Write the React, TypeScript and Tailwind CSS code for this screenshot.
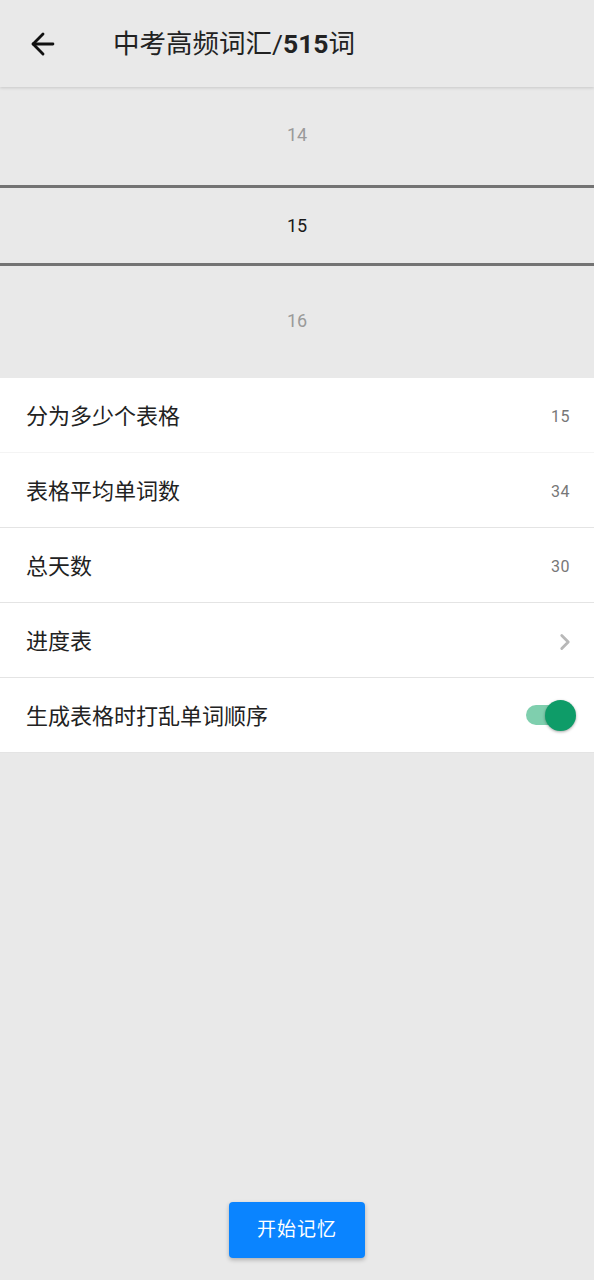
import { ArrowLeft, ChevronRight } from "lucide-react";

const FONT = { fontFamily: '"Roboto", "Noto Sans CJK SC", sans-serif' };

type Row = { label: string; value?: string; kind: "value" | "link" | "switch" };

const ROWS: Row[] = [
  { label: "分为多少个表格", value: "15", kind: "value" },
  { label: "表格平均单词数", value: "34", kind: "value" },
  { label: "总天数", value: "30", kind: "value" },
  { label: "进度表", kind: "link" },
  { label: "生成表格时打乱单词顺序", kind: "switch" },
];

export default function App() {
  return (
    <div className="min-h-[1280px] bg-[#e9e9e9] flex flex-col" style={FONT}>
      {/* Top bar */}
      <div className="h-[87px] flex items-center bg-[#e9e9e9] shadow-[0_1px_3px_rgba(0,0,0,0.15)] relative z-10">
        <ArrowLeft className="ml-[26px] w-[34px] h-[34px] text-[#111]" strokeWidth={2} />
        <span className="ml-[53px] text-[26.5px] text-[#222]">
          中考高频词汇/<span className="font-bold">515</span>词
        </span>
      </div>

      {/* Number picker */}
      <div className="flex flex-col">
        <div className="h-[98px] flex items-center justify-center pb-[4px] text-[18px] text-[#9a9a9a]">14</div>
        <div className="h-[3px] bg-[#737373]" />
        <div className="h-[75px] flex items-center justify-center text-[18px] text-[#1a1a1a]">15</div>
        <div className="h-[3px] bg-[#737373]" />
        <div className="h-[112px] flex items-center justify-center pb-[4px] text-[18px] text-[#9a9a9a]">16</div>
      </div>

      {/* Settings list */}
      <div className="bg-white">
        {ROWS.map((r, i) => (
          <div
            key={r.label}
            className={`h-[75px] flex items-center justify-between pt-[3px] pl-[26px] pr-[18px] ${
              i === 0 ? "border-b border-[#f4f4f4]" : "border-b border-[#e4e4e4]"
            }`}
          >
            <span className="text-[22px] text-[#222]">{r.label}</span>
            {r.kind === "value" && (
              <span className="text-[16px] text-[#777] tracking-[0.5px] pr-[6px]">{r.value}</span>
            )}
            {r.kind === "link" && (
              <ChevronRight className="w-[26px] h-[26px] text-[#b8b8b8] -mr-[2px]" strokeWidth={2.6} />
            )}
            {r.kind === "switch" && (
              <div className="relative w-[52px] h-[32px] flex items-center -mt-[3px]">
                <div className="absolute left-[2px] right-[6px] h-[20px] rounded-full bg-[#7fcfae]" />
                <div className="absolute right-0 w-[31px] h-[31px] rounded-full bg-[#0e9c68] shadow-[0_1px_3px_rgba(0,0,0,0.35)]" />
              </div>
            )}
          </div>
        ))}
      </div>

      <div className="flex-1" />

      {/* Start button */}
      <div className="flex justify-center pb-[22px]">
        <button className="w-[136px] h-[56px] rounded-[4px] bg-[#0a84ff] text-white text-[19px] tracking-[1px] shadow-[0_2px_4px_rgba(0,0,0,0.25)]">
          开始记忆
        </button>
      </div>
    </div>
  );
}
